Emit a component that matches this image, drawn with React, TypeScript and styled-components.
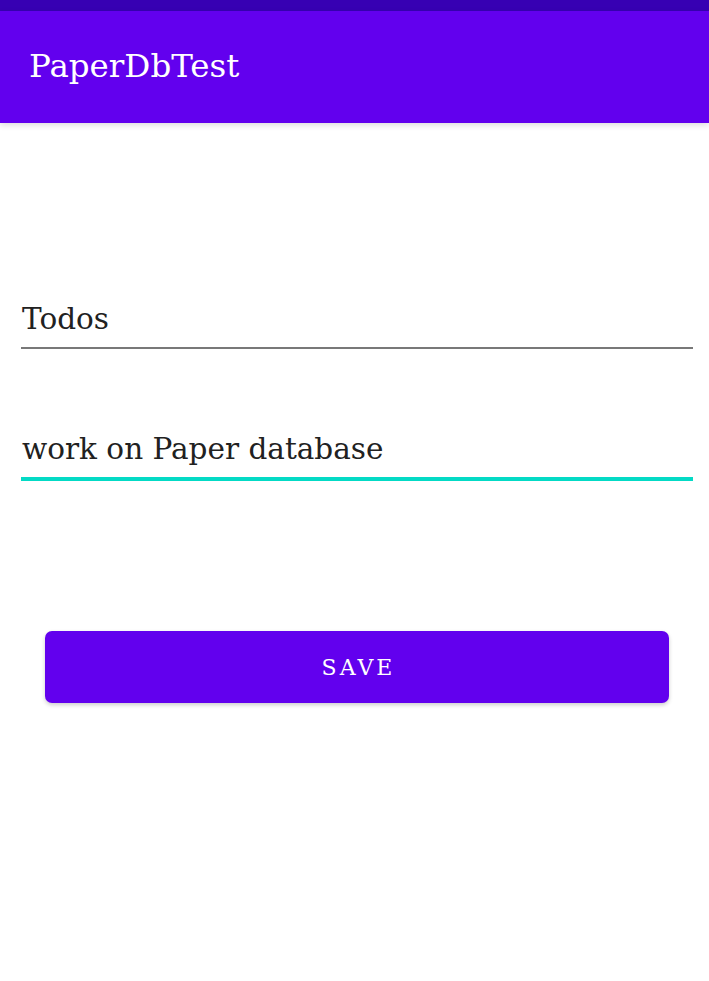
import React from "react";
import styled, { createGlobalStyle } from "styled-components";

const Global = createGlobalStyle`
  html, body { margin: 0; padding: 0; background: #ffffff; }
  body { font-family: "DejaVu Serif", "Liberation Serif", serif; }
`;

const Page = styled.div`
  display: flex;
  flex-direction: column;
  width: 709px;
  min-height: 981px;
  background: #ffffff;
`;

const StatusBar = styled.div`
  height: 11px;
  background: #3700b3;
`;

const Toolbar = styled.header`
  height: 112px;
  display: flex;
  align-items: center;
  padding-left: 29px;
  background: #6200ee;
  box-shadow: 0 2px 6px rgba(0, 0, 0, 0.14);
  position: relative;
  z-index: 1;
`;

const Title = styled.h1`
  margin: 0;
  font-family: "DejaVu Serif", serif;
  font-weight: normal;
  font-size: 32.5px;
  color: #ffffff;
  line-height: 40px;
  transform: translateY(-1px);
`;

const Content = styled.main`
  display: flex;
  flex-direction: column;
  padding: 0 16px 0 21px;
`;

const Field = styled.div<{ $focused?: boolean; $top: number }>`
  margin-top: ${(p) => p.$top}px;
  padding-left: 1px;
  font-family: "DejaVu Serif", serif;
  font-size: 29.5px;
  line-height: 40px;
  color: #212121;
  padding-bottom: 8px;
  border-bottom: ${(p) => (p.$focused ? "4px solid #03dac5" : "2px solid #787878")};
`;

const ButtonRow = styled.div`
  display: flex;
  padding: 0 24px;
  margin-top: 150px;
`;

const SaveButton = styled.button`
  flex: 1;
  height: 72px;
  border: none;
  border-radius: 7px;
  background: #6200ee;
  color: #ffffff;
  font-family: "DejaVu Serif", serif;
  font-size: 22px;
  letter-spacing: 3px;
  box-shadow: 0 2px 4px rgba(0, 0, 0, 0.2);
  padding: 0;
  padding-left: 3px;
`;

export default function App() {
  return (
    <>
      <Global />
      <Page>
        <StatusBar />
        <Toolbar>
          <Title>PaperDbTest</Title>
        </Toolbar>
        <Content>
          <Field $top={176}>Todos</Field>
          <Field $top={80} $focused>work on Paper database</Field>
          <ButtonRow>
            <SaveButton>SAVE</SaveButton>
          </ButtonRow>
        </Content>
      </Page>
    </>
  );
}
